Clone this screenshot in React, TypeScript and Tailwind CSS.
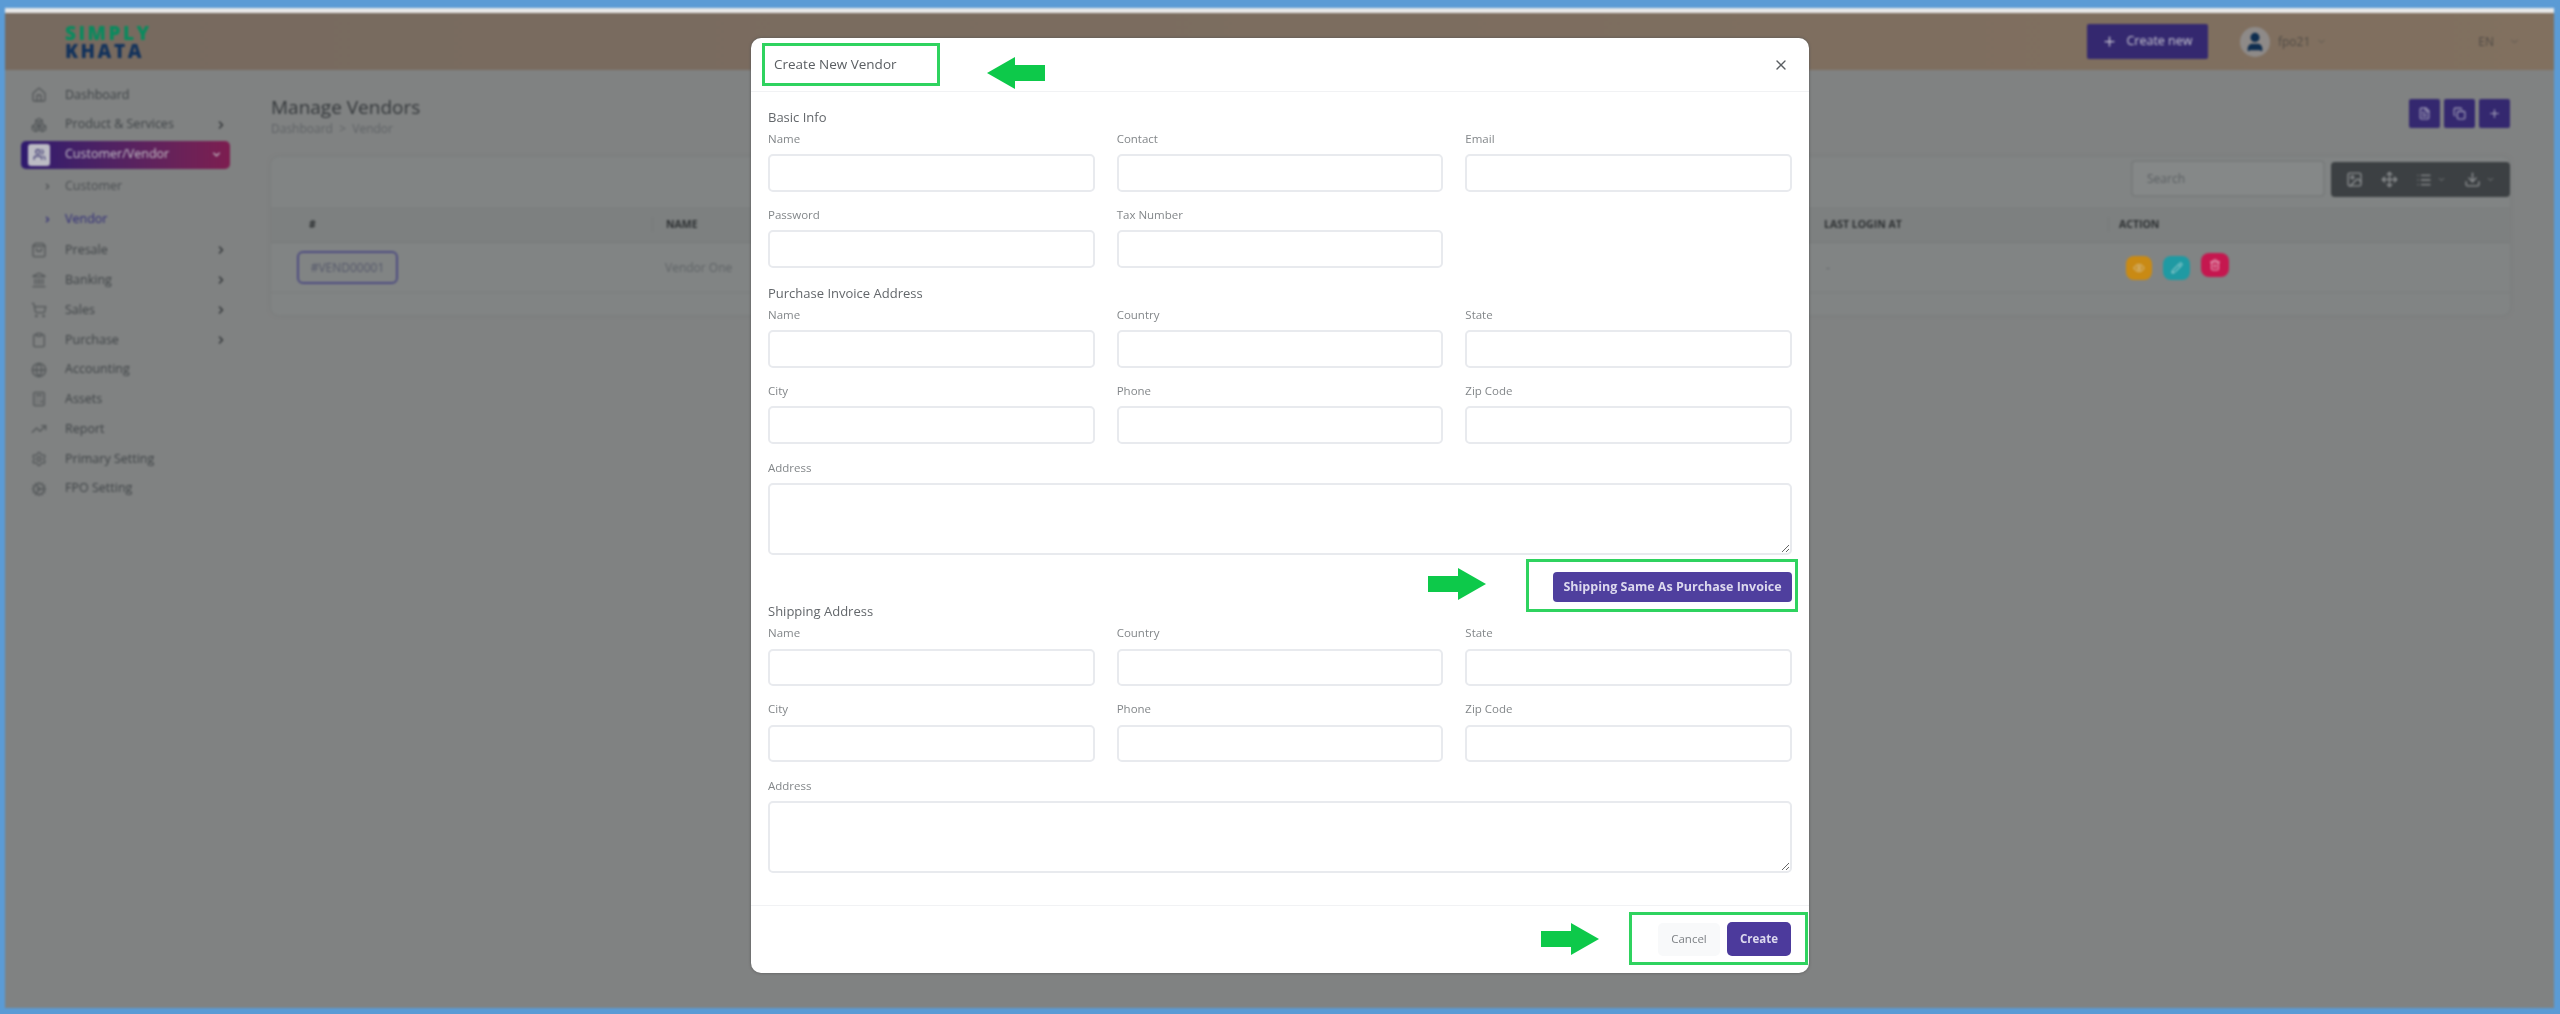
import React from 'react';
import {
  Home, Boxes, Users, ShoppingBag, Landmark, ShoppingCart, Clipboard, Globe, Calculator, TrendingUp, Settings, Cog,
  ChevronRight, ChevronDown, Plus, X, User, Copy, FileText, Image, Move, List, Download, Eye, Pencil, Trash2,
} from 'lucide-react';

const font = 'font-["Open_Sans","Liberation_Sans",sans-serif]';

const topItems = [
  { label: 'Dashboard', icon: Home },
  { label: 'Product & Services', icon: Boxes, arrow: true },
];

const bottomItems = [
  { label: 'Presale', icon: ShoppingBag, arrow: true },
  { label: 'Banking', icon: Landmark, arrow: true },
  { label: 'Sales', icon: ShoppingCart, arrow: true },
  { label: 'Purchase', icon: Clipboard, arrow: true },
  { label: 'Accounting', icon: Globe },
  { label: 'Assets', icon: Calculator },
  { label: 'Report', icon: TrendingUp },
  { label: 'Primary Setting', icon: Settings },
  { label: 'FPO Setting', icon: Cog },
];

const SideItem = ({ item }: { item: { label: string; icon: any; arrow?: boolean } }) => {
  const Icon = item.icon;
  return (
    <div className="flex h-[29.8px] items-center pl-[26px] pr-[44px] text-[12.5px] text-[#3f4447]">
      <Icon className="h-[16px] w-[16px] text-[#54585a]" />
      <span className="ml-[18px] flex-1">{item.label}</span>
      {item.arrow && <ChevronRight className="h-[12px] w-[12px] text-[#33373a]" strokeWidth={3} />}
    </div>
  );
};

const Sidebar = () => (
  <aside className="w-[266px] shrink-0 pt-[10px]">
    {topItems.map((item) => <SideItem key={item.label} item={item} />)}
    <div className="ml-[16px] mt-[1px] flex h-[28px] w-[209px] items-center rounded-[5px] bg-gradient-to-r from-[#2f1a6e] to-[#7d1d50] pl-[7px] pr-[8px] text-[12.5px] text-[#c5c2c8]">
      <span className="flex h-[22px] w-[22px] items-center justify-center rounded-[3px] bg-[#bcbcc4]">
        <Users className="h-[13px] w-[13px] text-[#3a3570]" />
      </span>
      <span className="ml-[15px] flex-1">Customer/Vendor</span>
      <ChevronDown className="h-[11px] w-[11px]" strokeWidth={3} />
    </div>
    <div className="flex h-[34px] items-center pl-[38px] pt-[2px] text-[12.5px] text-[#4b4f52]">
      <ChevronRight className="h-[9px] w-[9px]" strokeWidth={3} />
      <span className="ml-[13px]">Customer</span>
    </div>
    <div className="flex h-[33px] items-center pl-[38px] text-[12.5px] text-[#2e2b78]">
      <ChevronRight className="h-[9px] w-[9px]" strokeWidth={3} />
      <span className="ml-[13px]">Vendor</span>
    </div>
    {bottomItems.map((item) => <SideItem key={item.label} item={item} />)}
  </aside>
);

const Header = () => (
  <header className="flex h-[57px] items-center bg-gradient-to-r from-[#776a5f] to-[#81705f] pl-[60px] pr-[34px]">
    <div className="flex flex-col text-[19px] font-extrabold leading-[18px] tracking-[2.5px]">
      <span className="text-[#0a8a5e]">SIMPLY</span>
      <span className="text-[#12325c]">KHATA</span>
    </div>
    <button className="ml-auto flex h-[35px] w-[121px] items-center justify-center gap-[9px] rounded-[2px] bg-[#34286f] text-[12.5px] text-[#c9c8d2]">
      <Plus className="h-[15px] w-[15px]" />
      Create new
    </button>
    <span className="ml-[32px] flex h-[30px] w-[30px] items-center justify-center rounded-full bg-[#8e8a88]">
      <User className="h-[22px] w-[22px] fill-[#0f2e50] text-[#0f2e50]" />
    </span>
    <span className="ml-[8px] text-[12px] text-[#4f4a45]">fpo21</span>
    <ChevronDown className="ml-[6px] h-[11px] w-[11px] text-[#5a544e]" />
    <span className="ml-[151px] text-[12px] text-[#4f4a45]">EN</span>
    <ChevronDown className="ml-[15px] h-[11px] w-[11px] text-[#5a544e]" />
  </header>
);

const Content = () => (
  <main className="flex-1 pr-[44px]">
    <div className="flex h-[87px] items-start justify-between pt-[26px]">
      <div>
        <h1 className="text-[19px] font-medium leading-[22px] text-[#34383b]">Manage Vendors</h1>
        <p className="mt-[4px] text-[12px] leading-[14px] text-[#5f6366]">Dashboard &nbsp;&gt;&nbsp; Vendor</p>
      </div>
      <div className="mt-[3px] flex gap-[4px]">
        {[FileText, Copy, Plus].map((Icon, i) => (
          <span key={i} className="flex h-[29px] w-[31px] items-center justify-center rounded-[2px] bg-[#34286f]">
            <Icon className="h-[13px] w-[13px] text-[#a9a7bd]" />
          </span>
        ))}
      </div>
    </div>
    <section className="h-[158px] rounded-[8px] bg-[#818484] shadow-[0_0_4px_#787b7b]">
      <div className="flex h-[50px] items-start justify-end pt-[3px]">
        <div className="flex h-[37px] w-[194px] items-center rounded-[4px] border-2 border-[#797c7c] bg-[#858888] pl-[14px] text-[12px] text-[#5b5f62]">Search</div>
        <div className="ml-[6px] mt-[2px] flex h-[35px] w-[179px] items-center justify-around rounded-[4px] bg-[#3c4043] px-[6px] text-[#8a8d8f]">
          <Image className="h-[17px] w-[17px]" />
          <Move className="h-[17px] w-[17px]" />
          <span className="flex items-center gap-[5px]"><List className="h-[16px] w-[16px]" /><ChevronDown className="h-[9px] w-[9px]" /></span>
          <span className="flex items-center gap-[5px]"><Download className="h-[17px] w-[17px]" /><ChevronDown className="h-[9px] w-[9px]" /></span>
        </div>
      </div>
      <div className="flex h-[36px] items-center border-b border-[#777a7a] bg-[#7d8080] text-[10.5px] font-bold text-[#2d3032]">
        <span className="w-[381px] pl-[38px]">#</span>
        <span className="w-[1172px] border-l border-[#777a7a] pl-[13px]">NAME</span>
        <span className="w-[284px] pl-0">LAST LOGIN AT</span>
        <span className="border-l border-[#777a7a] pl-[10px]">ACTION</span>
      </div>
      <div className="flex h-[50px] items-center border-b border-[#7a7d7d] text-[12px] text-[#5f6366]">
        <div className="w-[381px] pl-[26px]">
          <span className="flex h-[33px] w-[101px] items-center justify-center rounded-[6px] border-2 border-[#4e4c80] text-[#55586a]">#VEND00001</span>
        </div>
        <span className="w-[1172px] pl-[13px]">Vendor One</span>
        <span className="w-[284px] pl-[2px]">-</span>
        <div className="flex items-start gap-[11px] pl-[18px]">
          <span className="flex h-[24px] w-[26px] items-center justify-center rounded-[8px] bg-[#c98a14]"><Eye className="h-[12px] w-[12px] text-[#d8c49a]" /></span>
          <span className="flex h-[24px] w-[27px] items-center justify-center rounded-[8px] bg-[#1f9aa3]"><Pencil className="h-[12px] w-[12px] text-[#bfe0e0]" /></span>
          <span className="-mt-[3px] flex h-[24px] w-[28px] items-center justify-center rounded-[8px] bg-[#c5174f]"><Trash2 className="h-[12px] w-[12px] text-[#e6b5c6]" /></span>
        </div>
      </div>
    </section>
  </main>
);

const Field = ({ label }: { label: string }) => (
  <div>
    <label className="block h-[16px] text-[11.5px] leading-[16px] text-[#83878a]">{label}</label>
    <input className="mt-[7px] block h-[38px] w-full rounded-[5px] border-2 border-[#e8eaee] bg-white" />
  </div>
);

const ShippingField = ({ label }: { label: string }) => (
  <div>
    <label className="block h-[16px] text-[11.5px] leading-[16px] text-[#83878a]">{label}</label>
    <input className="mt-[8px] block h-[37px] w-full rounded-[5px] border-2 border-[#e8eaee] bg-white" />
  </div>
);

const AddressFields = ({ shipping }: { shipping?: boolean }) => {
  const Item = shipping ? ShippingField : Field;
  return (
    <>
      <div className="grid grid-cols-3 gap-x-[22px] gap-y-[15px]">
        {['Name', 'Country', 'State', 'City', 'Phone', 'Zip Code'].map((l) => <Item key={l} label={l} />)}
      </div>
      <label className="mt-[16px] block h-[16px] text-[11.5px] leading-[16px] text-[#83878a]">Address</label>
      <textarea className="mt-[7px] block h-[72px] w-full rounded-[5px] border-2 border-[#e8eaee] bg-white" />
    </>
  );
};

const SectionTitle = ({ children, className }: { children: React.ReactNode; className?: string }) => (
  <h3 className={`h-[20px] text-[13px] leading-[20px] text-[#63676b] ${className ?? ''}`}>{children}</h3>
);

const Arrow = ({ className }: { className: string }) => (
  <svg viewBox="0 0 58 32" className={`absolute h-[32px] w-[58px] ${className}`}>
    <polygon points="0,8 30,8 30,0 58,16 30,32 30,24 0,24" fill="#0dc94a" />
  </svg>
);

const Callout = ({ className }: { className: string }) => (
  <div className={`pointer-events-none absolute border-[3px] border-[#2fd35f] ${className}`} />
);

const VendorModal = () => (
  <div className="absolute left-[751px] top-[38px] h-[935px] w-[1058px] rounded-[10px] bg-white shadow-[0_0_3px_#555] blur-[0.4px]">
    <div className="flex h-[54px] items-center justify-between border-b border-[#f1f2f4] pl-[23px] pr-[20px]">
      <h2 className="text-[13.5px] text-[#5a5e62]">Create New Vendor</h2>
      <X className="h-[16px] w-[16px] text-[#5a5e62]" />
    </div>
    <div className="h-[814px] border-b border-[#f1f2f4] px-[17px] pt-[15px]">
      <SectionTitle className="mb-[4px]">Basic Info</SectionTitle>
      <div className="grid grid-cols-3 gap-x-[22px] gap-y-[15px]">
        {['Name', 'Contact', 'Email', 'Password', 'Tax Number'].map((l) => <Field key={l} label={l} />)}
      </div>
      <SectionTitle className="mb-[4px] mt-[15px]">Purchase Invoice Address</SectionTitle>
      <AddressFields />
      <div className="mt-[17px] flex justify-end">
        <button className="h-[30px] w-[239px] rounded-[4px] bg-[#4f3f9e] text-[12.5px] font-bold text-[#dcd9ee]">Shipping Same As Purchase Invoice</button>
      </div>
      <SectionTitle className="mb-[4px] -mt-[1px]">Shipping Address</SectionTitle>
      <AddressFields shipping />
    </div>
    <div className="flex h-[66px] items-center justify-end gap-[7px] pr-[18px]">
      <button className="h-[33px] w-[62px] rounded-[5px] bg-[#f8f9fa] text-[11.5px] text-[#7d8185]">Cancel</button>
      <button className="h-[34px] w-[64px] rounded-[5px] bg-[#4c3a9c] text-[11.5px] font-bold text-[#dcd9ee]">Create</button>
    </div>

    <Callout className="left-[11px] top-[5px] h-[43px] w-[178px]" />
    <Arrow className="left-[236px] top-[19px] -scale-x-100" />
    <Callout className="left-[775px] top-[521px] h-[53px] w-[272px]" />
    <Arrow className="left-[677px] top-[530px]" />
    <Callout className="left-[878px] top-[874px] h-[53px] w-[179px]" />
    <Arrow className="left-[790px] top-[885px]" />
  </div>
);

const App = () => (
  <div className={`relative h-[1014px] w-full overflow-hidden bg-[#5b9bd5] pb-[6px] pl-[5px] pr-[6px] pt-[8px] ${font}`}>
    <div className="flex h-full flex-col bg-[#808282] blur-[1px]">
      <div className="h-[5px] shrink-0 bg-[#e8e8e8]" />
      <Header />
      <div className="flex flex-1">
        <Sidebar />
        <Content />
      </div>
    </div>
    <VendorModal />
  </div>
);

export default App;
